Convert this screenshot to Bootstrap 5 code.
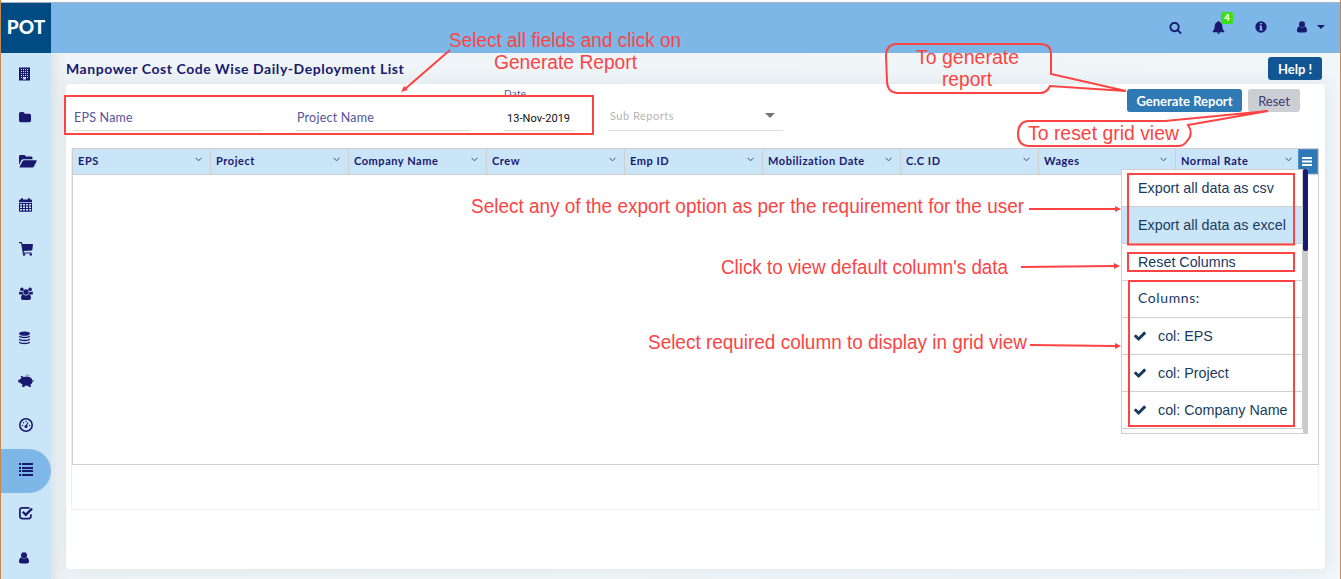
<!DOCTYPE html>
<html lang="en">
<head>
<meta charset="utf-8">
<meta name="viewport" content="width=device-width, initial-scale=1">
<title>Manpower Cost Code Wise Daily-Deployment List</title>
<link href="https://cdn.jsdelivr.net/npm/bootstrap@5.3.0/dist/css/bootstrap.min.css" rel="stylesheet">
<style>
body{font-family:Lato,"Liberation Sans",sans-serif;font-size:13px;color:#191970;background:#fff;letter-spacing:.5px}
.frame{height:579px;padding-top:2px;border-left:1px solid #c8874f;border-right:1px solid #c8874f}
.topbar{height:51px;background:#7cb7e8;border-top:1px solid #a9b3bd;padding-right:15px}
.topbar nav{padding-bottom:2px}
.brand{width:50px;height:50px;background:#004b83;font-size:19px;font-weight:900;letter-spacing:0;line-height:48px}
.side{width:50px;flex:none;background:#cbe5f8}
.side a{height:44px;padding:0 0 3px 18px;flex:none;color:#191970}
.side a.active{background:#7cb7e8;border-radius:0 22px 22px 0}
svg{fill:currentColor;display:block;flex:none}
.content{min-width:0;background:linear-gradient(90deg,#dfe5e8 0,#e9eff2 8px,#eef4f7 16px,#f1f6f9 100%);padding:0 15px 10px}
.titlebar{height:31px}
.titlebar h1{font-size:14px;font-weight:700;letter-spacing:.55px;padding-top:1px}
.btn-s{font-size:13px;font-weight:700;height:23px;line-height:22px;border-radius:3px;padding:0;border:0;color:#fff}
.help{background:#115593;width:54px;margin-right:3px}
.gen{background:#2f79b5;width:115px}
.rst{background:#cbced3;width:52px;color:#3b3b73;font-weight:400}
.panel{height:485px;background:#fff;border-radius:4px;box-shadow:0 0 18px 2px #dfe7ea;padding:0 6px 0 5px}
.filters{height:47px;margin-bottom:17px}
.fld{height:26px;border-bottom:1px solid #dcdcdc;font-size:12.5px;letter-spacing:.22px;line-height:26px;color:#54549a;margin-top:21px}
.fdate{font-family:Roboto,sans-serif;font-size:11px;line-height:28px;letter-spacing:.05px;color:#111}
.grid-outer{height:362px;border:1px solid #f1f1f1;border-top:0}
.grid-box{height:317px;width:1247px;border:1px solid #cfcfcf}
.ghead{height:26px;background:#cbe5f8;border-bottom:1px solid #cfcfcf;font-size:11px;font-weight:700;letter-spacing:.55px}
.gcol{width:138px;flex:none;border-right:1px solid #cfcfcf;padding:0 8px 0 5px}
.gcol:nth-child(8){width:137px}
.gcol:nth-child(9){width:122px;border:0;padding-right:6px}
.gcol svg{margin-bottom:4px}
.burger{width:20px;background:#2f79b5;color:#fff;padding-right:2px;box-shadow:inset 0 0 0 1px #4b8fd0}
.gmenu{left:1121px;top:169px;width:187px;height:265px;background:#fff;border:1px solid #cfcfcf;font:14.3px "Liberation Sans",Arial,sans-serif;letter-spacing:0;color:#173b60;padding-right:4px}
.gitem{height:37px;border-bottom:1px solid #cfcfcf;border-right:1px solid #cfcfcf;padding-left:16px;flex:none;white-space:nowrap}
.gitem.hot{background:#cbe5f8}
.gitem.chk{padding-left:12px}
.gitem.cap{font-family:Lato,sans-serif;font-size:14px;letter-spacing:.6px;padding-bottom:4px}
.gthumb{right:-1px;top:-1px;width:5px;height:82px;background:#191970;border-radius:2px}
.gtrack{right:-1px;top:-1px;width:5px;height:265px;background:#cbcbcb;border-radius:2px}
.notes{left:0;top:0;font:19.6px "Liberation Sans",Arial,sans-serif;letter-spacing:0}
.notes text{fill:#fc4444}
.notes .ln{fill:none;stroke:#fc4444;stroke-width:2}
.notes .hd{fill:#fc4444}
.bell-n{left:9px;top:-9px;width:12px;height:12px;background:#3be01b;color:#fff;font:900 9.5px/12px Lato,sans-serif;border-radius:2px;letter-spacing:0}
</style>
</head>
<body class="position-relative overflow-hidden">
<div class="frame d-flex flex-column">
  <header class="topbar d-flex align-items-center">
    <div class="brand text-white text-center">POT</div>
    <nav class="ms-auto d-flex align-items-center">
      <svg width="13" height="13" viewBox="0 0 1792 1792" style="margin-right:30px"><path d="M1216 832q0-185-131.500-316.500t-316.500-131.500-316.500 131.500-131.500 316.500 131.500 316.500 316.500 131.500 316.500-131.500 131.500-316.500zm512 832q0 52-38 90t-90 38q-54 0-90-38l-343-342q-179 124-399 124-143 0-273.500-55.500t-225-150-150-225-55.500-273.500 55.500-273.500 150-225 225-150 273.500-55.500 273.500 55.500 225 150 150 225 55.500 273.500q0 220-124 399l343 343q37 37 37 90z"/></svg>
      <span class="position-relative me-4"><svg width="13" height="13" viewBox="0 0 13 13"><path d="M6.500 0c.6 0 .9.400.8 1C9.400 1.500 10.300 3.200 10.300 5c0 3 1 4.300 2.200 5.400 0 .5-.3.800-.8.800H1.300c-.5 0-.8-.3-.8-.8C1.700 9.300 2.700 8 2.700 5c0-1.800.9-3.500 3-4C5.600.4 5.900 0 6.500 0zM5 11.600h3a1.500 1.400 0 0 1-3 0z"/></svg><span class="bell-n position-absolute text-center">4</span></span>
      <svg width="12" height="12" viewBox="0 0 12 12" style="margin-left:6px;margin-right:30px"><path fill-rule="evenodd" d="M6 .3a5.700 5.700 0 1 1 0 11.400A5.700 5.700 0 0 1 6 .3zM5 2v1.600h2V2zM4.200 4.700v1h.8v2.800h-.8v1h3.600v-1H7V4.700z"/></svg>
      <svg width="10" height="12" viewBox="0 0 10 12"><circle cx="5" cy="3.200" r="3"/><path d="M2.200 5.300C.6 6 0 7.700 0 9.500 0 10.800.8 11.500 2 11.500h6c1.200 0 2-.7 2-2 0-1.800-.6-3.500-2.200-4.200a3.900 3.900 0 0 1-5.600 0z"/></svg>
      <svg width="8" height="4" viewBox="0 0 8 4" style="margin-left:10px"><path d="M0 0h8L4 4z"/></svg>
    </nav>
  </header>
  <div class="d-flex flex-grow-1" style="min-height:0">
    <aside class="side d-flex flex-column overflow-hidden">
      <a class="d-flex align-items-center"><svg width="11" height="14" viewBox="0 0 11 14"><path fill-rule="evenodd" d="M0 .5h11v13H0zM2 2v1h1V2zm2 0v1h1V2zm2 0v1h1V2zm2 0v1h1V2zM2 4v1h1V4zm2 0v1h1V4zm2 0v1h1V4zm2 0v1h1V4zM2 6v1h1V6zm2 0v1h1V6zm2 0v1h1V6zm2 0v1h1V6zM2 8v1h1V8zm2 0v1h1V8zm2 0v1h1V8zm2 0v1h1V8zM2 10v1h1v-1zm2 0v2.500h3V10zm4 0v1h1v-1z"/></svg></a>
      <a class="d-flex align-items-center"><svg width="12" height="13" viewBox="64 0 1664 1792" preserveAspectRatio="none"><path d="M1728 608v704q0 92-66 158t-158 66h-1216q-92 0-158-66t-66-158v-960q0-92 66-158t158-66h320q92 0 158 66t66 158v32h672q92 0 158 66t66 158z"/></svg></a>
      <a class="d-flex align-items-center" style="padding-bottom:4px"><svg width="18" height="14" viewBox="0 0 18 14"><path d="M0 11V2.500C0 1.500.6 1 1.500 1H5c1 0 1.500.5 1.500 1.500H12c1 0 1.500.6 1.500 1.500v1.200H4.800C3.700 5.200 2.800 5.700 2.200 6.500zM.5 13l3-5.700c.4-.7 1-1 1.800-1h11.600c.7 0 1 .4.700 1l-2.700 5.100c-.3.700-.9 1-1.600 1H1C.6 13.400.3 13.300.5 13z"/></svg></a>
      <a class="d-flex align-items-center" style="padding-bottom:4px"><svg width="14" height="14" viewBox="0 0 14 14"><path fill-rule="evenodd" d="M0 2.500C0 1.800.4 1.500 1 1.500h1V.3h2v1.200h5V.3h2v1.200h1c.6 0 1 .3 1 1v1.700H0zM0 5h13v8c0 .5-.3.700-.8.700H.8c-.5 0-.8-.2-.8-.7zm1 1v1.500h2V6zm3 0v1.500h2V6zm3 0v1.500h2V6zm3 0v1.500h2V6zM1 8.500V10h2V8.500zm3 0V10h2V8.500zm3 0V10h2V8.500zm3 0V10h2V8.500zM1 11v1.500h2V11zm3 0v1.500h2V11zm3 0v1.500h2V11zm3 0v1.500h2V11z"/></svg></a>
      <a class="d-flex align-items-center" style="padding-bottom:4px"><svg width="14" height="14" viewBox="0 0 14 14"><path d="M0 0h2.400c.4 0 .6.300.7.600L3.400 2H13.500c.4 0 .5.200.5.600l-.7 5.200c0 .5-.3.700-.7.700l-7.900.5.200 1.500h7.600v1H4.400c-.4 0-.6-.2-.7-.6L2.100 1.200H0z"/><circle cx="5" cy="12.500" r="1.200"/><circle cx="11.800" cy="12.500" r="1.200"/></svg></a>
      <a class="d-flex align-items-center" style="padding-bottom:2px"><svg width="14" height="14" viewBox="0 0 14 14"><circle cx="2.900" cy="2.400" r="1.800"/><circle cx="11.100" cy="2.400" r="1.800"/><circle cx="7" cy="5" r="2.700"/><path d="M1 4.400c1 .8 2 .7 2.800.3-.1 1.200.2 2 .8 2.800H1.200C.5 7.500 0 7.200 0 6.500c0-1 .3-2 1-2.100zM13 4.400c-1 .8-2 .7-2.800.3.100 1.200-.2 2-.8 2.800h3.400c.7 0 1.200-.3 1.200-1 0-1-.3-2-1-2.100zM4.300 7.200C2.700 7.500 2 9.200 2 11c0 1.200.8 2 2 2h6c1.200 0 2-.8 2-2 0-1.800-.7-3.500-2.300-3.800a3.900 3.900 0 0 1-5.400 0z"/></svg></a>
      <a class="d-flex align-items-center" style="padding-bottom:2px"><svg width="11" height="14" viewBox="0 0 11 14"><ellipse cx="5.500" cy="2.600" rx="5.500" ry="2.200"/><path d="M0 4.400c1.500 1.900 9.500 1.900 11 0v1.100C10.500 7.700.5 7.700 0 5.500zM0 7.400c1.500 1.900 9.500 1.900 11 0v1.100C10.500 10.700.5 10.700 0 8.500zM0 10.400c1.500 1.900 9.500 1.900 11 0v1.100C10.500 13.700.5 13.700 0 11.500z"/></svg></a>
      <a class="d-flex align-items-center" style="padding-bottom:4px"><svg width="16" height="14" viewBox="0 0 16 14" style="margin-left:-1px"><path d="M3.500 4C3 3 2.600 2.300 2.800 2c1-.2 2 .2 2.800 1 2-.8 4.800-.7 6.500.3 1.400.8 2.200 2 2.300 3.400.4.200.7 0 .8-.7.600.2.700 1.700-.9 1.900-.2 1.200-.9 2.200-1.900 2.900l.6 2.200h-2.200l-.5-1.300c-1.100.2-2.400.2-3.400 0L6.300 13H4.100l.3-2.400C3.500 10.100 2.800 9.500 2.300 8.800L.3 8.300V5.800l1.600-.3c.4-.6.900-1.100 1.600-1.500zM6.500 1.600C7.800.4 10.500.4 11.600 1.800 10 1.300 8.300 1.200 6.500 1.600z"/></svg></a>
      <a class="d-flex align-items-center" style="padding-bottom:4px"><svg width="14" height="14" viewBox="0 0 14 14"><circle cx="7" cy="7" r="6.200" fill="none" stroke="currentColor" stroke-width="1.600"/><circle cx="7" cy="8.600" r="1.500"/><path d="M6.600 8L8.600 4l.8.400-1.500 3.900z"/><circle cx="3.500" cy="7.500" r=".7"/><circle cx="4.500" cy="4.700" r=".7"/><circle cx="7" cy="3.500" r=".7"/><circle cx="10.500" cy="7.500" r=".7"/></svg></a>
      <a class="active d-flex align-items-center"><svg width="14" height="13" viewBox="0 0 14 13"><path d="M0 0h2v2H0zM3 0h11v2H3zM0 4h2v2H0zM3 4h11v2H3zM0 7h2v2H0zM3 7h11v2H3zM0 11h2v2H0zM3 11h11v2H3z"/></svg></a>
      <a class="d-flex align-items-center" style="padding-bottom:4px"><svg width="14" height="14" viewBox="0 0 14 14"><path fill="none" stroke="currentColor" stroke-width="1.700" d="M10.500 1.800h-7Q.9 1.800.9 4v6.300q0 2.300 2.500 2.300h6.200q2.300 0 2.300-2.300V8.200"/><path fill="none" stroke="currentColor" stroke-width="2.300" d="M3.800 5.800l3 3 6.300-6.300"/></svg></a>
      <a class="d-flex align-items-center" style="padding-bottom:2px"><svg width="10" height="12" viewBox="0 0 10 12"><circle cx="5" cy="3.200" r="3"/><path d="M2.200 5.300C.6 6 0 7.700 0 9.500 0 10.800.8 11.500 2 11.500h6c1.200 0 2-.7 2-2 0-1.800-.6-3.500-2.200-4.200a3.900 3.900 0 0 1-5.600 0z"/></svg></a>
    </aside>
    <main class="content flex-grow-1">
      <div class="titlebar d-flex align-items-center justify-content-between">
        <h1 class="mb-0">Manpower Cost Code Wise Daily-Deployment List</h1>
        <button class="btn btn-s help">Help !</button>
      </div>
      <section class="panel">
        <div class="filters d-flex">
          <div class="fld" style="width:189px;margin-left:2px;padding-left:1px">EPS Name</div>
          <div class="fld" style="width:174px;margin-left:34px;padding-left:1px">Project Name</div>
          <div style="width:70px;margin-left:34px">
            <div style="height:21px;font-size:10px;line-height:19px;color:#54549a;letter-spacing:.3px">Date</div>
            <div class="fld fdate mt-0" style="padding-left:3px">13-Nov-2019</div>
          </div>
          <div class="fld d-flex align-items-center justify-content-between" style="width:175px;margin-left:34px;padding:0 8px 4px 2px;font-size:11px;letter-spacing:.5px;color:#b4b4b4">Sub Reports<svg width="10" height="5" viewBox="0 0 10 5" style="color:#757575"><path d="M0 0h10L5 5z"/></svg></div>
          <div class="ms-auto d-flex" style="padding:5px 19px 0 0;gap:6px"><button class="btn btn-s gen">Generate Report</button><button class="btn btn-s rst">Reset</button></div>
        </div>
        <div class="grid-outer">
          <div class="grid-box">
            <div class="ghead d-flex" id="ghead"></div>
          </div>
        </div>
      </section>
    </main>
  </div>
</div>

<div class="gmenu position-absolute d-flex flex-column">
  <div class="gitem d-flex align-items-center">Export all data as csv</div>
  <div class="gitem hot d-flex align-items-center">Export all data as excel</div>
  <div class="gitem d-flex align-items-center">Reset Columns</div>
  <div class="gitem cap d-flex align-items-center">Columns:</div>
  <div class="gitem chk d-flex align-items-center"><svg width="12" height="12" viewBox="121 250 1550 1300" class="me-2"><path d="M1671 566q0 40-28 68l-724 724-136 136q-28 28-68 28t-68-28l-136-136-362-362q-28-28-28-68t28-68l136-136q28-28 68-28t68 28l294 295 656-657q28-28 68-28t68 28l136 136q28 28 28 68z"/></svg><span class="ms-1">col: EPS</span></div>
  <div class="gitem chk d-flex align-items-center"><svg width="12" height="12" viewBox="121 250 1550 1300" class="me-2"><path d="M1671 566q0 40-28 68l-724 724-136 136q-28 28-68 28t-68-28l-136-136-362-362q-28-28-28-68t28-68l136-136q28-28 68-28t68 28l294 295 656-657q28-28 68-28t68 28l136 136q28 28 28 68z"/></svg><span class="ms-1">col: Project</span></div>
  <div class="gitem chk d-flex align-items-center"><svg width="12" height="12" viewBox="121 250 1550 1300" class="me-2"><path d="M1671 566q0 40-28 68l-724 724-136 136q-28 28-68 28t-68-28l-136-136-362-362q-28-28-28-68t28-68l136-136q28-28 68-28t68 28l294 295 656-657q28-28 68-28t68 28l136 136q28 28 28 68z"/></svg><span class="ms-1">col: Company Name</span></div>
  <div class="gtrack position-absolute"></div>
  <div class="gthumb position-absolute"></div>
</div>

<svg class="notes position-absolute" width="1341" height="579" viewBox="0 0 1341 579">
  <g class="ln">
    <path d="M65 96H593V134H65zM1128 174H1294V244.500H1128zM1128 253H1294V271H1128zM1129 281H1294V426H1129z"/>
    <path d="M450 50L405 89M1029 209H1115M1021 267L1114 266M1030 345L1115 346"/>
    <path d="M896 44H1040Q1051 44 1051 54L1051 74L1126 91L1050 86Q1047 93 1040 93H897Q887 92 887 81L886 56Q886 45 896 44z"/>
    <path d="M1028 121H1165L1268 111L1188 125Q1194 134 1187 141Q1184 146 1178 146H1028Q1018 145 1018 134Q1018 122 1028 121z"/>
  </g>
  <path class="hd" d="M401 92l3-6 4 4zM1121 209l-6-3v6zM1120 266l-6-3v6zM1121 346l-6-3v6z"/>
  <text x="449" y="47" textLength="232" lengthAdjust="spacingAndGlyphs">Select all fields and click on</text>
  <text x="494" y="69" textLength="143" lengthAdjust="spacingAndGlyphs">Generate Report</text>
  <text x="916" y="64" textLength="103" lengthAdjust="spacingAndGlyphs">To generate</text>
  <text x="942" y="86" textLength="50" lengthAdjust="spacingAndGlyphs">report</text>
  <text x="1028" y="140" textLength="151" lengthAdjust="spacingAndGlyphs">To reset grid view</text>
  <text x="471" y="213" textLength="553" lengthAdjust="spacingAndGlyphs">Select any of the export option as per the requirement for the user</text>
  <text x="721" y="274" textLength="287" lengthAdjust="spacingAndGlyphs">Click to view default column's data</text>
  <text x="648" y="349" textLength="379" lengthAdjust="spacingAndGlyphs">Select required column to display in grid view</text>
</svg>

<script>
const cols = ["EPS","Project","Company Name","Crew","Emp ID","Mobilization Date","C.C ID","Wages","Normal Rate"];
const chev = '<svg width="7" height="5" viewBox="0 0 7 5"><path d="M.5 .8L3.500 3.800L6.500 .8" fill="none" stroke="#44448f"/></svg>';
document.getElementById("ghead").innerHTML = cols.map(c =>
  `<div class="gcol d-flex align-items-center justify-content-between"><span>${c}</span>${chev}</div>`).join("") +
  '<div class="burger d-flex align-items-center justify-content-center"><svg width="10" height="9" viewBox="0 0 10 9"><path d="M0 0h10v2H0zM0 3.500h10v2H0zM0 7h10v2H0z"/></svg></div>';
</script>
<script src="https://cdn.jsdelivr.net/npm/bootstrap@5.3.0/dist/js/bootstrap.bundle.min.js"></script>
</body>
</html>
